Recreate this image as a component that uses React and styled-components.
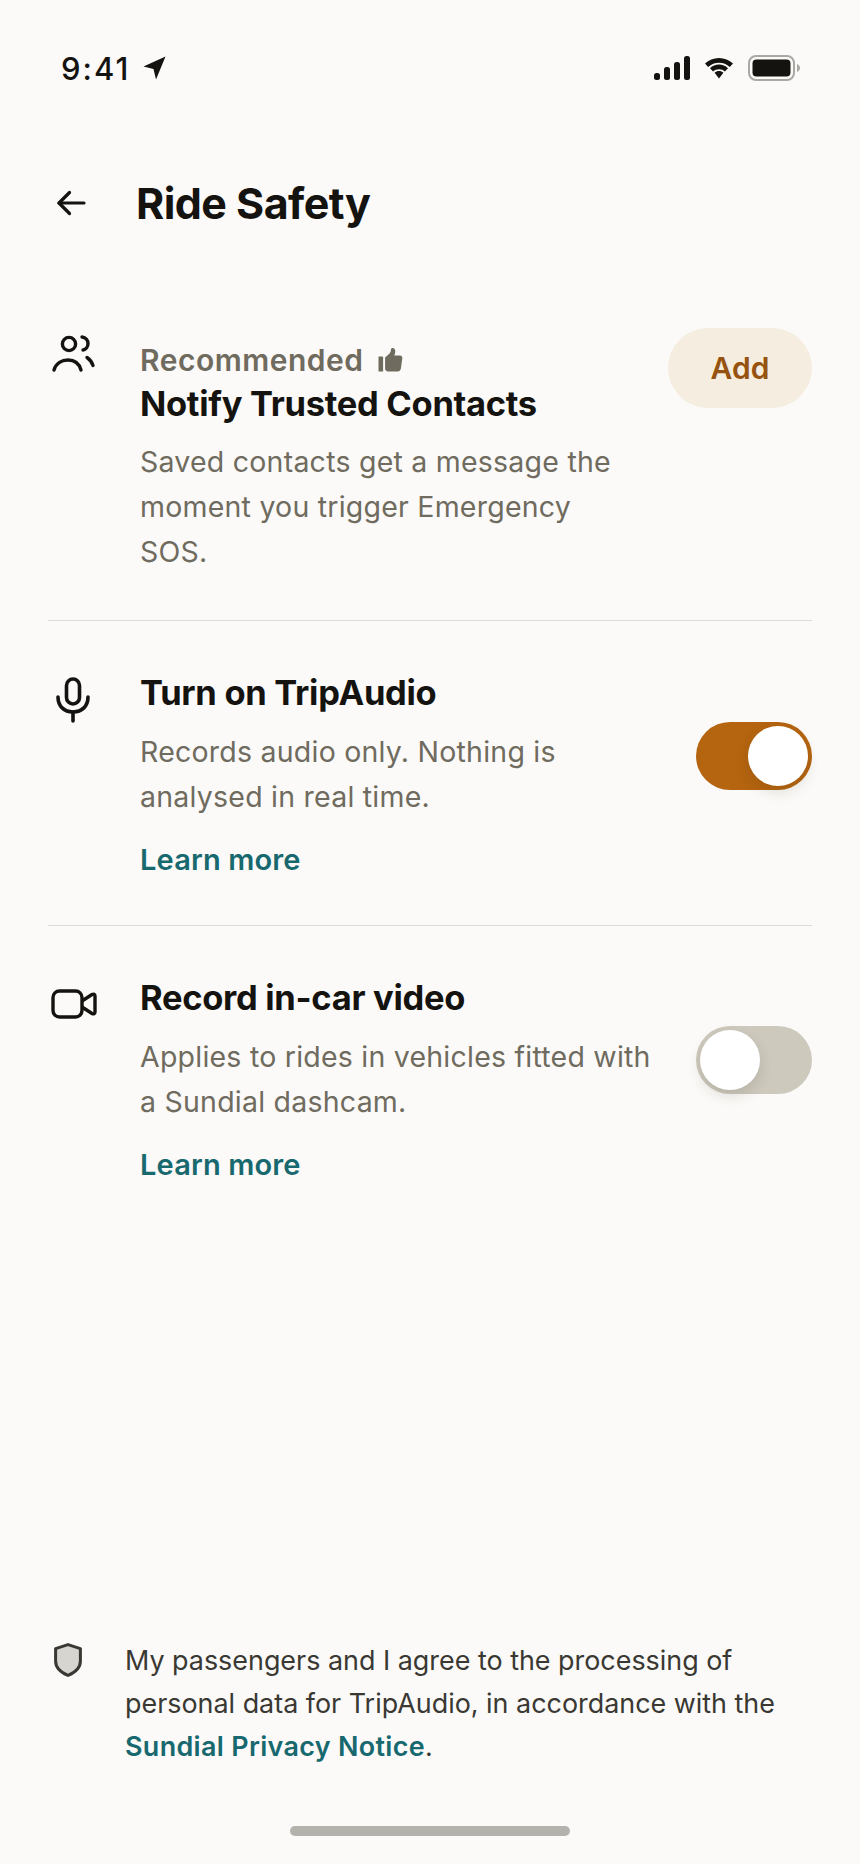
import React from "react";
import styled, { createGlobalStyle } from "styled-components";

const INK = "#141310";
const MUTED = "#6f6b5e";
const TEAL = "#17696f";

const GlobalStyle = createGlobalStyle`
  html, body {
    margin: 0;
    padding: 0;
    background: #fbfaf8;
  }
  body {
    font-family: Inter, "Noto Sans", sans-serif;
    -webkit-font-smoothing: antialiased;
  }
`;

const Screen = styled.div`
  width: 860px;
  height: 1864px;
  box-sizing: border-box;
  display: flex;
  flex-direction: column;
  background: #fbfaf8;
  color: ${INK};
`;

const StatusBar = styled.div`
  height: 48px;
  margin-top: 44px;
  padding: 0 60px 0 61px;
  display: flex;
  align-items: center;
  justify-content: space-between;
`;

const Clock = styled.div`
  display: flex;
  align-items: center;
  gap: 13px;
  font-size: 31px;
  font-weight: 500;
  letter-spacing: 2px;
`;

const StatusIcons = styled.div`
  display: flex;
  align-items: center;
  gap: 15px;
`;

const Header = styled.div`
  margin-top: 66px;
  padding-left: 56px;
  height: 90px;
  display: flex;
  align-items: center;
  gap: 50px;
`;

const Title = styled.h1`
  margin: 0;
  font-size: 43px;
  font-weight: 700;
  letter-spacing: -0.55px;
`;

const List = styled.div`
  margin-top: 48px;
  padding: 0 48px;
`;

const Row = styled.div`
  display: grid;
  grid-template-columns: 92px 1fr auto;
  padding-top: ${p => p.$top}px;
  padding-bottom: ${p => p.$bottom}px;
  border-bottom: ${p => (p.$last ? "none" : "1px solid #dcdbd6")};
`;

const IconCell = styled.div`
  padding-top: ${p => p.$top || 0}px;
  padding-left: ${p => p.$left || 0}px;
`;

const Body = styled.div`
  display: flex;
  flex-direction: column;
  max-width: ${p => p.$width}px;
`;

const Eyebrow = styled.div`
  display: flex;
  align-items: center;
  gap: 15px;
  height: 45px;
  margin-top: 9px;
  font-size: 30px;
  font-weight: 600;
  color: ${MUTED};
  letter-spacing: 0.5px;
`;

const RowTitle = styled.div`
  font-size: 34.5px;
  line-height: 44px;
  font-weight: 700;
  letter-spacing: -0.3px;
`;

const Description = styled.div`
  margin-top: ${p => p.$top || 14}px;
  font-size: 28.5px;
  line-height: 45px;
  color: ${MUTED};
  letter-spacing: 0.23px;
`;

const LearnMore = styled.a`
  margin-top: 21px;
  font-size: 29px;
  line-height: 40px;
  font-weight: 600;
  color: ${TEAL};
  letter-spacing: 0.15px;
`;

const AddButton = styled.button`
  width: 144px;
  height: 80px;
  border: none;
  border-radius: 40px;
  background: #f5eddf;
  color: #96520f;
  font-family: inherit;
  font-size: 30px;
  font-weight: 600;
`;

const ToggleTrack = styled.div`
  position: relative;
  width: 116px;
  height: 68px;
  margin-top: ${p => p.$top}px;
  border-radius: 34px;
  background: ${p => (p.$on ? "#b5640f" : "#cdc9bd")};
`;

const ToggleKnob = styled.div`
  position: absolute;
  top: 4px;
  left: ${p => (p.$on ? "52px" : "4px")};
  width: 60px;
  height: 60px;
  border-radius: 50%;
  background: #fff;
  box-shadow: 0 6px 14px rgba(60, 50, 30, 0.14);
`;

const Footer = styled.div`
  margin-top: auto;
  padding: 0 48px 0 54px;
  display: grid;
  grid-template-columns: 71px 1fr;
`;

const FooterText = styled.div`
  font-size: 26.9px;
  line-height: 43px;
  color: #3a3833;
`;

const FooterLink = styled.a`
  font-weight: 600;
  color: ${TEAL};
  letter-spacing: 0.34px;
`;

const HomeIndicator = styled.div`
  width: 280px;
  height: 10px;
  margin: 58px auto 28px;
  border-radius: 5px;
  background: #b4b2ad;
`;

const LocationArrow = () => (
  <svg width="23" height="24" viewBox="0 0 23 24" fill={INK}>
    <path d="M22.5 0.5 L0.5 10.5 L10.5 13 L13 23.5 Z" strokeLinejoin="round" />
  </svg>
);

const SignalIcon = () => (
  <svg width="36" height="24" viewBox="0 0 36 24" fill={INK}>
    <rect x="0" y="17" width="6" height="7" rx="2.5" />
    <rect x="10" y="11" width="6" height="13" rx="2.5" />
    <rect x="20" y="6" width="6" height="18" rx="2.5" />
    <rect x="30" y="0" width="6" height="24" rx="2.5" />
  </svg>
);

const WifiIcon = () => (
  <svg width="28" height="21" viewBox="0 0 28 21" fill={INK}>
    <path d="M14 0 C19.5 0 24.2 2.1 28 5.5 L24.8 9 C21.8 6.3 18.1 4.8 14 4.8 C9.9 4.8 6.2 6.3 3.2 9 L0 5.5 C3.8 2.1 8.5 0 14 0 Z" />
    <path d="M14 6.6 C17.4 6.6 20.6 7.9 23 10.2 L19.9 13.5 C18.3 12 16.3 11.2 14 11.2 C11.7 11.2 9.7 12 8.1 13.5 L5 10.2 C7.4 7.9 10.6 6.6 14 6.6 Z" />
    <path d="M14 13 C15.7 13 17.2 13.6 18.4 14.8 L14 20.5 L9.6 14.8 C10.8 13.6 12.3 13 14 13 Z" />
  </svg>
);

const BatteryIcon = () => (
  <svg width="52" height="26" viewBox="0 0 52 26">
    <rect x="1" y="1" width="45" height="24" rx="7" fill="none" stroke="#a9a8a4" strokeWidth="2" />
    <rect x="4.5" y="4.5" width="38" height="17" rx="4" fill={INK} />
    <path d="M49 9 C51 10 52 11.5 52 13 C52 14.5 51 16 49 17 Z" fill="#a9a8a4" />
  </svg>
);

const BackIcon = () => (
  <svg width="30" height="26" viewBox="0 0 30 26" fill="none" stroke={INK} strokeWidth="3.2" strokeLinecap="round" strokeLinejoin="round">
    <path d="M3 13 H28" />
    <path d="M13.5 2.5 L3 13 L13.5 23.5" />
  </svg>
);

const UsersIcon = () => (
  <svg width="48" height="40" viewBox="0 0 48 40" fill="none" stroke={INK} strokeWidth="3.4" strokeLinecap="round">
    <circle cx="20" cy="11" r="6.6" />
    <path d="M5 37 C7 30 13 27 19 27 C25 27 30 30 32 37" />
    <path d="M33 4 C37 4.5 39 7.5 39 10.5 C39 13.5 37 16.5 34 17" />
    <path d="M38 24.5 C41 26.5 43 29.5 44 32.5" />
  </svg>
);

const MicIcon = () => (
  <svg width="34" height="46" viewBox="0 0 34 46" fill="none" stroke={INK} strokeWidth="3.6" strokeLinecap="round">
    <rect x="10.5" y="2" width="13" height="25" rx="6.5" />
    <path d="M2 20 C2 29 8 35 17 35 C26 35 32 29 32 20" />
    <path d="M17 35 V44" />
  </svg>
);

const VideoIcon = () => (
  <svg width="46" height="30" viewBox="0 0 46 30" fill="none" stroke={INK} strokeWidth="3.4" strokeLinejoin="round">
    <rect x="2" y="2" width="29" height="26" rx="6.5" />
    <path d="M31 12 L41 5.5 C42.5 4.6 44 5.4 44 7 V23 C44 24.6 42.5 25.4 41 24.5 L31 18" />
  </svg>
);

const ThumbIcon = () => (
  <svg width="25" height="24" viewBox="0 0 24 24" fill={MUTED}>
    <rect x="0" y="8.5" width="4.6" height="15" rx="0.6" />
    <path d="M6.6 9.5 L11 5.5 C12 4.5 12.4 3 12.4 1.8 C12.4 0.6 13.2 0 14.2 0 C15.8 0 16.8 1.6 16.8 3.6 C16.8 5 16.3 6.4 15.8 7.6 H21.4 C23 7.6 24 8.8 23.8 10.3 L22.4 20.6 C22.1 22.4 20.8 23.5 19 23.5 H9.5 C7.8 23.5 6.6 22.3 6.6 20.6 Z" />
  </svg>
);

const ShieldIcon = () => (
  <svg width="28" height="34" viewBox="0 0 28 34">
    <path d="M14 1.6 L26.4 5.6 V18 C26.4 24.6 21 29.6 14 32.4 C7 29.6 1.6 24.6 1.6 18 V5.6 Z" fill="#d6d5d0" stroke="#3a3833" strokeWidth="3" strokeLinejoin="round" />
  </svg>
);

const Toggle = ({ on, top }) => (
  <ToggleTrack $on={on} $top={top}>
    <ToggleKnob $on={on} />
  </ToggleTrack>
);

export default function App() {
  return (
    <Screen>
      <GlobalStyle />
      <StatusBar>
        <Clock>
          9:41
          <LocationArrow />
        </Clock>
        <StatusIcons>
          <SignalIcon />
          <WifiIcon />
          <BatteryIcon />
        </StatusIcons>
      </StatusBar>
      <Header>
        <BackIcon />
        <Title>Ride Safety</Title>
      </Header>
      <List>
        <Row $top={32} $bottom={46}>
          <IconCell $top={5} $left={1}>
            <UsersIcon />
          </IconCell>
          <Body $width={480}>
            <Eyebrow>
              Recommended
              <ThumbIcon />
            </Eyebrow>
            <RowTitle>Notify Trusted Contacts</RowTitle>
            <Description $top={13}>
              Saved contacts get a message the moment you trigger Emergency SOS.
            </Description>
          </Body>
          <AddButton>Add</AddButton>
        </Row>
        <Row $top={50} $bottom={45}>
          <IconCell $top={6} $left={8}>
            <MicIcon />
          </IconCell>
          <Body $width={520}>
            <RowTitle>Turn on TripAudio</RowTitle>
            <Description>
              Records audio only. Nothing is analysed in real time.
            </Description>
            <LearnMore>Learn more</LearnMore>
          </Body>
          <Toggle on top={51} />
        </Row>
        <Row $top={50} $bottom={0} $last>
          <IconCell $top={13} $left={3}>
            <VideoIcon />
          </IconCell>
          <Body $width={520}>
            <RowTitle>Record in-car video</RowTitle>
            <Description>
              Applies to rides in vehicles fitted with a Sundial dashcam.
            </Description>
            <LearnMore>Learn more</LearnMore>
          </Body>
          <Toggle top={50} />
        </Row>
      </List>
      <Footer>
        <IconCell $top={4}>
          <ShieldIcon />
        </IconCell>
        <FooterText>
          My passengers and I agree to the processing of personal data for
          TripAudio, in accordance with the{" "}
          <FooterLink>Sundial Privacy Notice</FooterLink>.
        </FooterText>
      </Footer>
      <HomeIndicator />
    </Screen>
  );
}
